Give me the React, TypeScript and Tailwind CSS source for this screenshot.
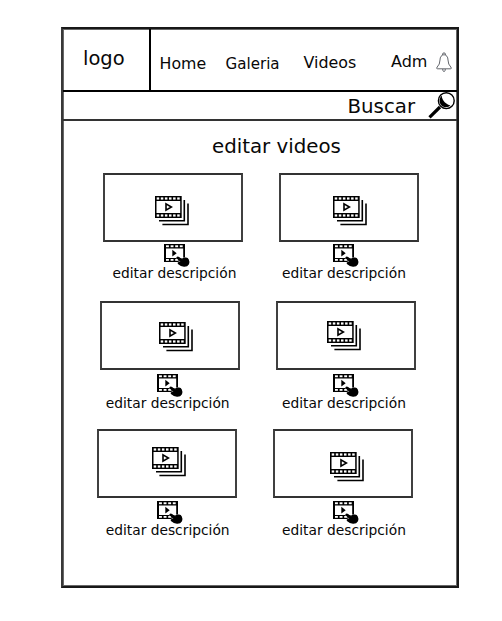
const items = [
  [
    { film: 'ml-[50px] mt-[20.5px]', edit: 'ml-[61px] mt-[2px]', text: 'ml-[9.5px]' },
    { film: 'ml-[52px] mt-[20.5px]', edit: 'ml-[54px] mt-[2px]', text: 'ml-[3px]' },
  ],
  [
    { film: 'ml-[57px] mt-[18.5px]', edit: 'ml-[57px] mt-[4px]', text: 'ml-[5.7px]' },
    { film: 'ml-[49px] mt-[17.5px]', edit: 'ml-[57px] mt-[4px]', text: 'ml-[6px]' },
  ],
  [
    { film: 'ml-[53px] mt-[15.5px]', edit: 'ml-[60px] mt-[3px]', text: 'ml-[8.7px]' },
    { film: 'ml-[55px] mt-[20.5px]', edit: 'ml-[60px] mt-[3px]', text: 'ml-[9px]' },
  ],
];
const rowPad = ['pl-[40px]', 'pl-[37px]', 'pl-[34px]'];

function FilmStack({ className }: { className: string }) {
  return (
    <svg className={className} width="35" height="30" viewBox="0 0 35 30" fill="none">
      <path d="M0 0H26.7V22H0ZM1.5 5V17H25.2V5Z" fill="#000" fillRule="evenodd" />
      {[1.7, 5.8, 9.9, 14, 18.1, 22.2].map((x) => (
        <g key={x} fill="#fff">
          <rect x={x} y="1.4" width="2.5" height="2.2" />
          <rect x={x} y="18.4" width="2.5" height="2.2" />
        </g>
      ))}
      <path d="M11 7.8V14.2L16.4 11Z" stroke="#000" strokeWidth="1.6" />
      <path d="M29.3 4V24.8H4" stroke="#000" strokeWidth="1.6" />
      <path d="M33 7.6V28.5H7.4" stroke="#000" strokeWidth="1.6" />
    </svg>
  );
}

function EditFilm({ className }: { className: string }) {
  return (
    <svg className={className} width="26" height="23" viewBox="0 0 26 23">
      <path d="M0 0H21V18H0ZM2 4.6V14H19.2V4.6Z" fillRule="evenodd" />
      {[2, 6.6, 11.2, 15.8].map((x) => (
        <g key={x} fill="#fff">
          <rect x={x} y="1.3" width="2.9" height="1.9" />
          <rect x={x} y="15" width="2.9" height="1.8" />
        </g>
      ))}
      <path d="M8.3 5.8V12.6L12.7 9.2Z" />
      <path
        d="M12.6 13.1Q13.7 12 15.1 13.1L18.1 15.2Q19.2 12.8 21.5 13.6Q23.9 13.3 24.8 15.6Q26 18 25 20.3Q23.4 23 20 22.8Q16.8 22.5 13.9 20Q13 18.6 14.6 18L16.6 17.9L12.8 14.6Q12 13.9 12.6 13.1Z"
        stroke="#fff"
        strokeWidth="0.6"
        paintOrder="stroke"
      />
    </svg>
  );
}

function Bell() {
  return (
    <svg className="ml-[8.5px] mt-[23px] shrink-0" width="16" height="21" viewBox="0 0 16 21" fill="none" stroke="#30343c" strokeWidth="0.75">
      <path d="M6.5 2.9V2.2Q6.6 .9 8 .9Q9.4 .9 9.5 2.2V2.9" />
      <path d="M8 2.7Q4.1 3.2 4 8Q3.9 12.6 1.2 15Q-.1 16.8 1.6 16.8H14.4Q16.1 16.8 14.8 15Q12.1 12.6 12 8Q11.9 3.2 8 2.7Z" />
      <path d="M6.8 17V18.6Q8 20.6 9.2 18.6V17" />
    </svg>
  );
}

function Magnifier() {
  return (
    <svg className="ml-[12.5px] shrink-0" width="28" height="27" viewBox="0 0 28 27">
      <path d="M1.5 25.4L12 15" stroke="#000" strokeWidth="3.2" />
      <circle cx="18.3" cy="8.7" r="7.9" fill="#fff" stroke="#000" strokeWidth="1.4" />
      <path d="M13.7 3.6C10.7 6.6 10.9 12 14.4 14.2C17.4 16 20.9 15.2 22.4 13.3C18.6 12.9 14 8.9 13.7 3.6Z" />
    </svg>
  );
}

export default function App() {
  return (
    <div className="flex h-[621px] w-[502px] bg-white pl-[61px] pt-[27px] font-['DejaVu_Sans',sans-serif] text-[#080808]">
      <main className="h-[561px] w-[398px] border-2 border-[#181818] border-l-[#383838] shadow-[inset_0_0_0_1px_#686868]">
        <header className="flex h-[63px] border-b-2 border-black">
          <div className="w-[88px] shrink-0 border-r-2 border-black pl-[20px] pt-[18px] text-[19.5px] leading-6">logo</div>
          <nav className="flex leading-5">
            <span className="ml-[8.5px] mt-[25px] w-[66px] text-[15.8px]">Home</span>
            <span className="mt-[25px] w-[78px] text-[15.1px]">Galeria</span>
            <span className="mt-[24px] w-[87.5px] text-[15.9px]">Videos</span>
            <span className="mt-[23px] text-[16px]">Adm</span>
            <Bell />
          </nav>
        </header>
        <div className="flex h-[29px] border-b-2 border-[#333] pl-[284.5px]">
          <span className="pt-px text-[19.8px] leading-[28px]">Buscar</span>
          <Magnifier />
        </div>
        <h1 className="h-[52px] pl-[149px] pt-[14px] text-[19.8px] leading-6">editar videos</h1>
        {items.map((row, r) => (
          <section key={r} className={`flex h-[128px] gap-[36px] ${rowPad[r]}`}>
            {row.map((item, i) => (
              <article key={i} className="flex w-[140px] flex-col">
                <div className="h-[69px] shrink-0 border-2 border-x-[#404040] border-y-[#333]">
                  <FilmStack className={item.film} />
                </div>
                <EditFilm className={`shrink-0 ${item.edit}`} />
                <span className={`-mt-0.5 whitespace-nowrap text-[13.8px] leading-4 ${item.text}`}>editar descripción</span>
              </article>
            ))}
          </section>
        ))}
      </main>
    </div>
  );
}
